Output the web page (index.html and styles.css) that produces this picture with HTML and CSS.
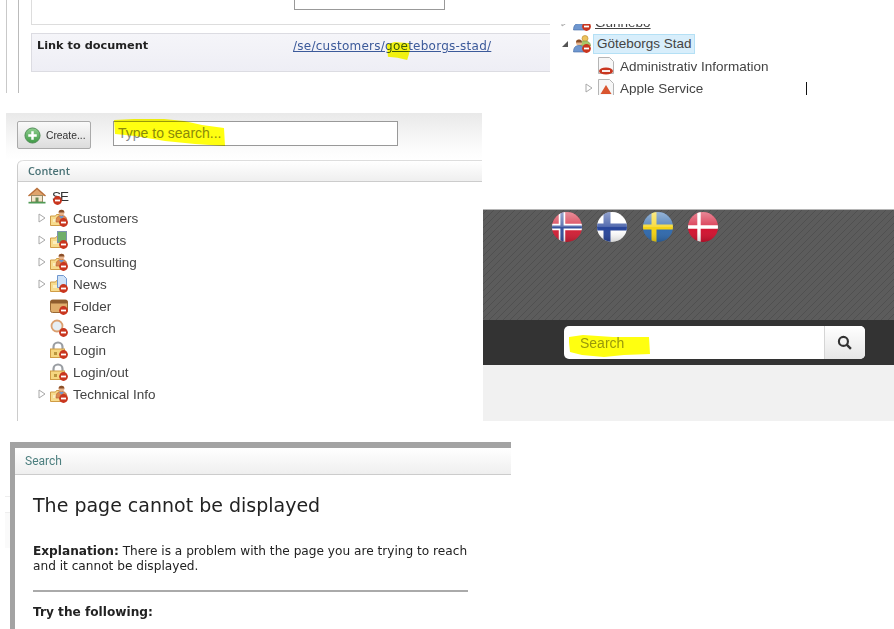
FILE: index.html
```html
<!DOCTYPE html>
<html lang="en">
  <head>
    <meta charset="UTF-8" />
    <meta name="viewport" content="width=device-width, initial-scale=1.0" />
    <title>Search screenshots</title>
    <link rel="stylesheet" href="styles.css">
  </head>
  <body>
    <svg class="sprite" width="0" height="0" aria-hidden="true">
      <defs>
        <linearGradient id="gloss" x1="0" y1="0" x2="0" y2="1">
          <stop offset="0" stop-color="#fff" stop-opacity=".5" />
          <stop offset=".48" stop-color="#fff" stop-opacity=".22" />
          <stop offset=".52" stop-color="#fff" stop-opacity="0" />
          <stop offset="1" stop-color="#000" stop-opacity=".18" />
        </linearGradient>
        <linearGradient id="greenball" x1="0" y1="0" x2="0" y2="1">
          <stop offset="0" stop-color="#8fce8f" />
          <stop offset="1" stop-color="#3f9a45" />
        </linearGradient>
        <clipPath id="ball"><circle cx="15" cy="15" r="15" /></clipPath>

        <symbol id="badge" viewBox="0 0 18 18">
          <circle cx="13.5" cy="13.5" r="4.4" fill="#c9361f" />
          <rect x="11" y="12.6" width="5" height="1.8" fill="#fff" />
        </symbol>
        <symbol id="folder" viewBox="0 0 18 18">
          <path d="M.5 7h5l1-1.5h6v11H.5z" fill="#f7dc8e" stroke="#d09c45" />
          <rect x="3" y="10" width="4" height="3" fill="#fbeebd" />
        </symbol>
        <symbol id="person" viewBox="0 0 18 18">
          <path d="M6 13c0-5 2-6.500 5.500-6.500S17 8 17 13z" fill="#dc8a4f" stroke="#b9653a" stroke-width=".7" />
          <path d="M9 7l2.500 3L14 7z" fill="#6f97cf" />
          <circle cx="11.500" cy="3.600" r="2.900" fill="#e8b48c" />
          <path d="M8.600 3.600a2.900 2.900 0 0 1 5.800 0z" fill="#8a4f2a" />
        </symbol>

        <symbol id="ico-customers" viewBox="0 0 18 18">
          <use href="#folder" /><use href="#person" /><use href="#badge" />
        </symbol>
        <symbol id="ico-products" viewBox="0 0 18 18">
          <use href="#folder" />
          <rect x="7.500" y=".5" width="9" height="11" fill="#6fae6a" stroke="#7d93ae" />
          <use href="#badge" />
        </symbol>
        <symbol id="ico-news" viewBox="0 0 18 18">
          <use href="#folder" />
          <path d="M7.500 .5h6l3 3v9h-9z" fill="#cfe2f7" stroke="#6f97cf" />
          <use href="#badge" />
        </symbol>
        <symbol id="ico-box" viewBox="0 0 18 18">
          <rect x=".5" y="3" width="17" height="12.500" rx="2" fill="#dfae6c" stroke="#9a6a35" />
          <rect x=".5" y="3" width="17" height="3.500" rx="1.500" fill="#8f5d2e" />
          <use href="#badge" />
        </symbol>
        <symbol id="ico-search" viewBox="0 0 18 18">
          <circle cx="7" cy="7" r="5.500" fill="#e6eef4" stroke="#dba070" stroke-width="1.800" />
          <use href="#badge" />
        </symbol>
        <symbol id="ico-lock" viewBox="0 0 18 18">
          <path d="M3.500 8.500V6a4.500 4.500 0 0 1 9 0v2.500" fill="none" stroke="#9a9ea3" stroke-width="2.200" />
          <rect x=".5" y="8" width="14" height="8.500" fill="#f5d680" stroke="#d09c45" />
          <rect x="4" y="11" width="3" height="3" fill="#b9963e" />
          <use href="#badge" />
        </symbol>
        <symbol id="ico-home" viewBox="0 0 18 18">
          <path d="M.5 9L9 1.500 17.500 9" fill="#dfa46c" stroke="#b9703b" stroke-width="1.400" />
          <rect x="3.500" y="8.500" width="11" height="6.500" fill="#f3e6cc" stroke="#9a8a66" />
          <rect x="7.500" y="10.500" width="3" height="4.500" fill="#6a8a55" />
          <rect x=".5" y="14.800" width="17" height="1.700" fill="#4f9a55" />
        </symbol>
        <symbol id="ico-group" viewBox="0 0 18 18">
          <circle cx="12" cy="3.500" r="3" fill="#ecc25c" stroke="#c0913a" stroke-width=".7" />
          <path d="M7 11c0-3.500 2-5 5-5s5.500 1.500 5.500 5z" fill="#a7c66a" stroke="#7d963f" stroke-width=".6" />
          <circle cx="6" cy="7.500" r="3" fill="#e8b48c" />
          <path d="M3 7.500a3 3 0 0 1 6 0z" fill="#8a4f2a" />
          <path d="M.5 17c0-4.500 2-6.500 5.500-6.500s5.500 2 5.500 6.500z" fill="#6f97cf" stroke="#3f6aa5" stroke-width=".6" />
          <use href="#badge" />
        </symbol>
        <symbol id="ico-doc" viewBox="0 0 18 18">
          <path d="M1.500 .5h11l4 4v12h-15z" fill="#f7f7f7" stroke="#b5b5b5" />
          <ellipse cx="9" cy="14" rx="7" ry="3.600" fill="#c9361f" />
          <rect x="5" y="13.100" width="8" height="1.800" fill="#fff" />
        </symbol>
        <symbol id="ico-service" viewBox="0 0 18 18">
          <path d="M1.500 .5h11l4 4v13h-15z" fill="#f7f7f7" stroke="#b5b5b5" />
          <path d="M9 6l5.500 9h-11z" fill="#d9552f" />
        </symbol>
        <symbol id="tri" viewBox="0 0 8 10">
          <path d="M1 1l6 4-6 4z" fill="#fff" stroke="#a8a8a8" />
        </symbol>
        <symbol id="tri-open" viewBox="0 0 8 8">
          <path d="M7 1v6H1z" fill="#555" />
        </symbol>
      </defs>
    </svg>

    <!-- crop: document properties -->
    <section class="shot shot-link">
      <div class="rail">
        <div class="rail rail-inner">
          <div class="prop-box">
            <div class="prop-input"></div>
          </div>
          <div class="prop-row">
            <strong class="prop-label">Link to document</strong>
            <a class="prop-value" href="#">/se/customers/<span class="mark-word">goe<svg class="mark" viewBox="0 0 26 20" preserveAspectRatio="none"><path d="M1 4l8-2 15 1 1 6-1 4-2 6-10-2-10-1z" /></svg></span>teborgs-stad/</a>
          </div>
        </div>
      </div>
    </section>

    <!-- crop: tree with selected node -->
    <section class="shot shot-tree">
      <ul class="tree tree-clipped">
        <li class="node node-gunnebo">
          <svg class="twist"><use href="#tri" /></svg>
          <svg class="icon"><use href="#ico-group" /></svg>
          <a class="node-link" href="#">Gunnebo</a>
        </li>
        <li class="node node-gunnebo">
          <svg class="twist twist-open"><use href="#tri-open" /></svg>
          <svg class="icon"><use href="#ico-group" /></svg>
          <span class="node-selected">Göteborgs Stad</span>
        </li>
        <li class="node node-child">
          <span class="twist"></span>
          <svg class="icon"><use href="#ico-doc" /></svg>
          <span>Administrativ Information</span>
        </li>
        <li class="node node-child">
          <svg class="twist"><use href="#tri" /></svg>
          <svg class="icon"><use href="#ico-service" /></svg>
          <span>Apple Service</span>
        </li>
      </ul>
      <span class="caret"></span>
    </section>

    <!-- crop: cms navigation -->
    <section class="shot shot-cms">
      <div class="toolbar">
        <button class="create-btn">
          <svg class="create-icon" viewBox="0 0 18 18">
            <circle cx="9" cy="9" r="8" fill="url(#greenball)" stroke="#4f8a55" />
            <path d="M9 4.500v9M4.500 9h9" stroke="#fff" stroke-width="2.600" />
          </svg>
          Create...
        </button>
        <div class="type-search">
          <span class="type-text">Type to search...</span>
          <svg class="mark mark-type" viewBox="0 0 112 28" preserveAspectRatio="none"><path d="M1 1l40-2 30 3 18 4 22 3 1 18-30-2-30-3-30-5-20-2z" /></svg>
        </div>
      </div>
      <div class="panel">
        <div class="panel-head">Content</div>
        <ul class="tree">
          <li class="node node-root">
            <svg class="icon"><use href="#ico-home" /></svg>
            <span class="root-label">SE<svg class="root-badge"><use href="#badge" /></svg></span>
          </li>
          <li class="node"><svg class="twist"><use href="#tri" /></svg><svg class="icon"><use href="#ico-customers" /></svg><span>Customers</span></li>
          <li class="node"><svg class="twist"><use href="#tri" /></svg><svg class="icon"><use href="#ico-products" /></svg><span>Products</span></li>
          <li class="node"><svg class="twist"><use href="#tri" /></svg><svg class="icon"><use href="#ico-customers" /></svg><span>Consulting</span></li>
          <li class="node"><svg class="twist"><use href="#tri" /></svg><svg class="icon"><use href="#ico-news" /></svg><span>News</span></li>
          <li class="node"><span class="twist"></span><svg class="icon"><use href="#ico-box" /></svg><span>Folder</span></li>
          <li class="node"><span class="twist"></span><svg class="icon"><use href="#ico-search" /></svg><span>Search</span></li>
          <li class="node"><span class="twist"></span><svg class="icon"><use href="#ico-lock" /></svg><span>Login</span></li>
          <li class="node"><span class="twist"></span><svg class="icon"><use href="#ico-lock" /></svg><span>Login/out</span></li>
          <li class="node"><svg class="twist"><use href="#tri" /></svg><svg class="icon"><use href="#ico-customers" /></svg><span>Technical Info</span></li>
        </ul>
      </div>
    </section>

    <!-- crop: site header -->
    <section class="shot shot-site">
      <div class="site-stripes">
        <div class="flags">
          <svg class="flag" viewBox="0 0 30 30"><g clip-path="url(#ball)"><rect width="30" height="30" fill="#d21f35" /><path d="M10 0v30M0 15h30" stroke="#fff" stroke-width="6.500" /><path d="M10 0v30M0 15h30" stroke="#35509c" stroke-width="3.200" /><rect width="30" height="30" fill="url(#gloss)" /></g></svg>
          <svg class="flag" viewBox="0 0 30 30"><g clip-path="url(#ball)"><rect width="30" height="30" fill="#fff" /><path d="M10 0v30M0 15h30" stroke="#27459a" stroke-width="7" /><rect width="30" height="30" fill="url(#gloss)" /></g></svg>
          <svg class="flag" viewBox="0 0 30 30"><g clip-path="url(#ball)"><rect width="30" height="30" fill="#2f69ad" /><path d="M11 0v30M0 15h30" stroke="#f5d312" stroke-width="5" /><rect width="30" height="30" fill="url(#gloss)" /></g></svg>
          <svg class="flag" viewBox="0 0 30 30"><g clip-path="url(#ball)"><rect width="30" height="30" fill="#d2102e" /><path d="M11 0v30M0 15h30" stroke="#fff" stroke-width="3.400" /><rect width="30" height="30" fill="url(#gloss)" /></g></svg>
        </div>
      </div>
      <div class="site-bar">
        <div class="site-search">
          <div class="site-input">
            <span class="site-text">Search</span>
            <svg class="mark mark-site" viewBox="0 0 82 22" preserveAspectRatio="none"><path d="M1 2l14-2 30 2 36 0 1 17-26 1-20 2-22-2-12-3-1-10z" /></svg>
          </div>
          <div class="site-btn">
            <svg width="15" height="15" viewBox="0 0 14 14"><circle cx="6" cy="6" r="4.200" fill="none" stroke="#333" stroke-width="2" /><path d="M9 9l4 4" stroke="#333" stroke-width="2.200" /></svg>
          </div>
        </div>
      </div>
      <div class="site-foot"></div>
    </section>

    <!-- crop: error page -->
    <section class="shot shot-stub"></section>
    <section class="shot shot-error">
      <div class="error-head">Search</div>
      <div class="error-body">
        <h1>The page cannot be displayed</h1>
        <p><b>Explanation:</b> There is a problem with the page you are trying to reach<br>and it cannot be displayed.</p>
        <hr>
        <p><b>Try the following:</b></p>
      </div>
    </section>
  </body>
</html>
```

FILE: styles.css
```css
html, body {
  margin: 0;
  height: 100%;
  background: #fff;
  overflow: hidden;
}

body {
  font-family: "Liberation Sans", Arial, sans-serif;
  color: #444;
}

.sprite {
  position: absolute;
}

.shot {
  position: absolute;
  overflow: hidden;
}

ul {
  list-style: none;
  margin: 0;
  padding: 0;
}

/* yellow highlighter */
.mark {
  position: absolute;
  fill: #ffff10;
  mix-blend-mode: multiply;
}

/* document properties */
.shot-link {
  left: 0;
  top: 0;
  width: 550px;
  height: 93px;
  padding-left: 6px;
  box-sizing: border-box;
}

.rail {
  height: 93px;
  padding-left: 11px;
  border-left: 1px solid #c9c9c9;
}

.rail-inner {
  padding-left: 12px;
  border-left-color: #bbb;
}

.prop-box {
  height: 24px;
  border-left: 1px solid #ddd;
  border-bottom: 1px solid #ddd;
  padding-left: 262px;
}

.prop-input {
  width: 151px;
  height: 10px;
  border: 1px solid #999;
  border-top: 0;
  box-sizing: border-box;
}

.prop-row {
  display: flex;
  margin-top: 8px;
  height: 39px;
  box-sizing: border-box;
  padding: 4px 0 0 5px;
  border: 1px solid #dcdce2;
  border-right: 0;
  background: linear-gradient(#f5f5f9, #eeeef5);
  font-family: "DejaVu Sans", sans-serif;
  font-size: 12px;
  line-height: 16px;
}

.prop-label {
  width: 256px;
  font-size: 11.3px;
  color: #222;
}

.prop-value {
  color: #3c5a9a;
  letter-spacing: .25px;
}

.mark-word {
  position: relative;
}

.mark-word .mark {
  left: 1px;
  top: 1px;
  width: 25px;
  height: 21px;
}

/* tree */
.node {
  display: flex;
  align-items: center;
  height: 22px;
  font-size: 13.5px;
  color: #444;
  white-space: nowrap;
}

.twist {
  flex: none;
  width: 8px;
  height: 10px;
  margin-right: 4px;
}

.twist-open {
  height: 8px;
}

.icon {
  flex: none;
  width: 18px;
  height: 18px;
  margin-right: 5px;
}

/* tree crop */
.shot-tree {
  left: 550px;
  top: 24px;
  width: 344px;
  height: 71px;
}

.tree-clipped {
  margin-top: -13px;
  padding-left: 11px;
}

.node-gunnebo .icon {
  margin-right: 4px;
}

.node-link {
  color: #444;
}

.node-selected {
  padding: 0 2px 0 3px;
  margin-left: -2px;
  line-height: 18px;
  background: #d8eefb;
  border: 1px solid #b4e0f5;
}

.node-child {
  padding-left: 24px;
}

.caret {
  position: absolute;
  left: 256px;
  top: 58px;
  width: 1px;
  height: 13px;
  background: #111;
}

/* cms crop */
.shot-cms {
  left: 6px;
  top: 113px;
  width: 476px;
  height: 308px;
}

.toolbar {
  display: flex;
  align-items: flex-start;
  gap: 22px;
  height: 47px;
  box-sizing: border-box;
  padding: 8px 0 0 11px;
  background: linear-gradient(#e9e9e9, #fbfbfb 34px, #fff);
}

.create-btn {
  display: flex;
  align-items: center;
  gap: 5px;
  width: 74px;
  height: 28px;
  padding: 0 0 0 6px;
  border: 1px solid #aaa;
  border-radius: 2px;
  background: linear-gradient(#fafafa, #dcdcdc);
  font-family: "Liberation Sans", sans-serif;
  font-size: 10.3px;
  color: #333;
}

.create-icon {
  width: 17px;
  height: 17px;
}

.type-search {
  position: relative;
  width: 285px;
  height: 25px;
  box-sizing: border-box;
  border: 1px solid #999;
  background: #fff;
  padding-left: 4px;
  font-size: 14px;
  line-height: 23px;
}

.type-text {
  color: #8a8a8a;
}

.mark-type {
  left: -1px;
  top: -3px;
  width: 112px;
  height: 28px;
}

.panel {
  margin-left: 11px;
  border-left: 1px solid #ccc;
  height: 261px;
  border-top-left-radius: 6px;
}

.panel-head {
  height: 20px;
  padding-left: 10px;
  border-top: 1px solid #ddd;
  border-bottom: 1px solid #ccc;
  border-top-left-radius: 6px;
  background: linear-gradient(#fff, #efefef);
  font-family: "Open Sans", sans-serif;
  font-weight: 600;
  font-size: 10.8px;
  line-height: 19px;
  color: #4a7276;
}

.panel .tree {
  padding: 3px 0 0 20px;
}

.panel .node-root {
  margin-left: -10px;
}

.panel .node-root .icon {
  margin-right: 6px;
}

.root-label {
  position: relative;
  letter-spacing: -1px;
  color: #333;
}

.root-badge {
  position: absolute;
  left: -8px;
  top: -2px;
  width: 18px;
  height: 18px;
}

/* site crop */
.shot-site {
  left: 483px;
  top: 209px;
  width: 411px;
  height: 212px;
  display: flex;
  flex-direction: column;
}

.site-stripes {
  height: 111px;
  box-sizing: border-box;
  border-top: 1px solid #b5b5b5;
  background: repeating-linear-gradient(-45deg, #5c5c5c 0 3.8px, #505050 4.1px 4.6px, #5c5c5c 4.95px);
}

.flags {
  display: flex;
  gap: 15.3px;
  padding: 2px 0 0 69px;
}

.flag {
  width: 30px;
  height: 30px;
}

.site-bar {
  height: 45px;
  box-sizing: border-box;
  padding: 6px 0 0 81px;
  background: #333;
}

.site-search {
  display: flex;
  width: 301px;
  height: 33px;
  border-radius: 5px;
  overflow: hidden;
  background: #fff;
}

.site-input {
  position: relative;
  flex: 1;
  padding-left: 16px;
  font-size: 14px;
  line-height: 34px;
}

.site-text {
  color: #999;
}

.mark-site {
  left: 4px;
  top: 9px;
  width: 82px;
  height: 22px;
}

.site-btn {
  display: flex;
  align-items: center;
  justify-content: center;
  width: 41px;
  padding-right: 2px;
  box-sizing: border-box;
  border-left: 1px solid #d5d5d5;
  background: linear-gradient(#fff, #e6e6e6);
}

.site-foot {
  flex: 1;
  background: #f1f1f1;
}

/* error crop */
.shot-stub {
  left: 5px;
  top: 496px;
  width: 5px;
  height: 52px;
  box-sizing: border-box;
  border-top: 1px solid #eee;
  background: linear-gradient(#fff 15px, #eee 15px, #eee 16px, #fafafa 16px);
}

.shot-error {
  left: 10px;
  top: 442px;
  width: 501px;
  height: 187px;
  box-sizing: border-box;
  border-top: 6px solid #a3a3a3;
  border-left: 5px solid #a3a3a3;
  background: #fff;
}

.error-head {
  height: 26px;
  padding-left: 10px;
  border-bottom: 1px solid #ccc;
  background: linear-gradient(#fff, #efefef);
  font-family: "Roboto", sans-serif;
  font-size: 12px;
  line-height: 27px;
  color: #4d7f7f;
}

.error-body {
  padding: 0 0 0 18px;
  width: 435px;
  font-family: "DejaVu Sans", sans-serif;
  color: #222;
}

.error-body h1 {
  margin: 18px 0 0;
  font-weight: normal;
  font-size: 19px;
  line-height: 24px;
}

.error-body p {
  margin: 27px 0 0;
  font-size: 12.15px;
  line-height: 15px;
}

.error-body hr {
  margin: 16px 0 0;
  border: 0;
  height: 2px;
  background: #aaa;
}

.error-body hr + p {
  margin-top: 13px;
}
```
